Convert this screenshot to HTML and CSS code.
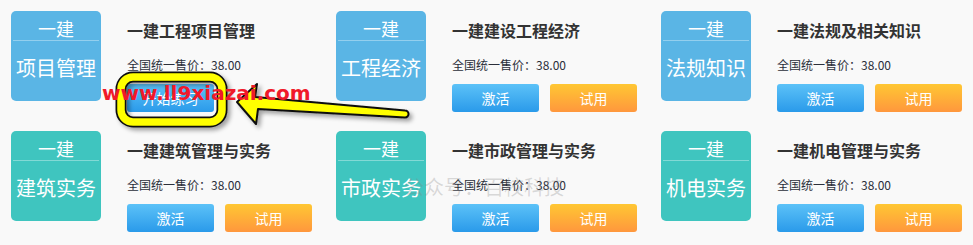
FILE: index.html
```html
<!DOCTYPE html>
<html lang="zh-CN">
<head>
<meta charset="utf-8">
<title>一建课程</title>
<link rel="stylesheet" href="styles.css">
</head>
<body>
<div class="page">
  <div class="grid">
    <div class="card">
      <div class="tile blue"><div class="tile-top">一建</div><div class="tile-line"></div><div class="tile-main">项目管理</div></div>
      <div class="info">
        <div class="title">一建工程项目管理</div>
        <div class="price">全国统一售价：38.00</div>
        <div class="btns"><span class="btn b-blue">开始练习</span></div>
      </div>
    </div>
    <div class="card">
      <div class="tile blue"><div class="tile-top">一建</div><div class="tile-line"></div><div class="tile-main">工程经济</div></div>
      <div class="info">
        <div class="title">一建建设工程经济</div>
        <div class="price">全国统一售价：38.00</div>
        <div class="btns"><span class="btn b-blue">激活</span><span class="btn b-orange">试用</span></div>
      </div>
    </div>
    <div class="card">
      <div class="tile blue"><div class="tile-top">一建</div><div class="tile-line"></div><div class="tile-main">法规知识</div></div>
      <div class="info">
        <div class="title">一建法规及相关知识</div>
        <div class="price">全国统一售价：38.00</div>
        <div class="btns"><span class="btn b-blue">激活</span><span class="btn b-orange">试用</span></div>
      </div>
    </div>
    <div class="card">
      <div class="tile teal"><div class="tile-top">一建</div><div class="tile-line"></div><div class="tile-main">建筑实务</div></div>
      <div class="info">
        <div class="title">一建建筑管理与实务</div>
        <div class="price">全国统一售价：38.00</div>
        <div class="btns"><span class="btn b-blue">激活</span><span class="btn b-orange">试用</span></div>
      </div>
    </div>
    <div class="card">
      <div class="tile teal"><div class="tile-top">一建</div><div class="tile-line"></div><div class="tile-main">市政实务</div></div>
      <div class="info">
        <div class="title">一建市政管理与实务</div>
        <div class="price">全国统一售价：38.00</div>
        <div class="btns"><span class="btn b-blue">激活</span><span class="btn b-orange">试用</span></div>
      </div>
    </div>
    <div class="card">
      <div class="tile teal"><div class="tile-top">一建</div><div class="tile-line"></div><div class="tile-main">机电实务</div></div>
      <div class="info">
        <div class="title">一建机电管理与实务</div>
        <div class="price">全国统一售价：38.00</div>
        <div class="btns"><span class="btn b-blue">激活</span><span class="btn b-orange">试用</span></div>
      </div>
    </div>
  </div>

  <svg class="marks" width="973" height="245" viewBox="0 0 973 245" xmlns="http://www.w3.org/2000/svg">
    <defs>
      <filter id="sh" x="-20%" y="-40%" width="140%" height="180%">
        <feDropShadow dx="3" dy="3" stdDeviation="2" flood-color="#000" flood-opacity="0.35"/>
      </filter>
    </defs>
    <g filter="url(#sh)">
      <rect x="121" y="77" width="101" height="45" rx="12" ry="12" fill="none" stroke="#111" stroke-width="11"/>
      <rect x="121" y="77" width="101" height="45" rx="12" ry="12" fill="none" stroke="#ffff00" stroke-width="7.5"/>
    </g>
    <path filter="url(#sh)" d="M237,102 L257,84 L255,97 L405,110.5 A3.5,3.5 0 0 1 405,117.5 L258,109 L256,124 Z" fill="#ffff00" stroke="#111" stroke-width="2" stroke-linejoin="round"/>
  </svg>
  <div class="wm-site">www.ll9xiazai.com</div>
  <div class="wm-gzh">公众号：百校科技</div>
</div>
</body>
</html>
```
FILE: styles.css
```css
html, body {
  margin: 0;
  padding: 0;
  background: #f9f9f9;
}
body {
  font-family: "Noto Sans CJK SC", "Microsoft YaHei", sans-serif;
  color: #333;
}
.page {
  position: relative;
  width: 973px;
  height: 245px;
  overflow: hidden;
}
.grid {
  display: grid;
  grid-template-columns: repeat(3, 325px);
  grid-auto-rows: 120px;
  padding: 11px 0 0 11px;
}
.card {
  display: flex;
  align-items: flex-start;
}
.tile {
  width: 90px;
  height: 90px;
  border-radius: 5px;
  color: #fff;
  display: flex;
  flex-direction: column;
  align-items: stretch;
  text-align: center;
  flex: none;
}
.blue { background: #5ab5e5; }
.teal { background: #3fc5bf; }
.tile-top {
  height: 29px;
  box-sizing: border-box;
  padding-top: 8px;
  font-size: 18px;
  line-height: 18px;
}
.tile-line {
  height: 1px;
  margin: 0 2px;
  background: rgba(255, 255, 255, 0.35);
}
.tile-main {
  padding-top: 17px;
  font-size: 20px;
  line-height: 20px;
}
.info {
  margin-left: 26px;
  padding-top: 9px;
  display: flex;
  flex-direction: column;
}
.title {
  font-size: 16px;
  line-height: 20px;
  font-weight: 700;
  color: #333;
}
.price {
  margin-top: 17px;
  font-size: 12px;
  line-height: 16px;
  color: #2b2f3a;
}
.btns {
  margin-top: 11px;
  display: flex;
  gap: 11px;
}
.btn {
  width: 87px;
  height: 28px;
  border-radius: 3px;
  color: #fff;
  font-size: 14px;
  line-height: 28px;
  text-align: center;
}
.b-blue {
  background: linear-gradient(#5cc2f8, #2a9aea);
}
.b-orange {
  background: linear-gradient(#ffc733, #ff973d);
}
.marks {
  position: absolute;
  left: 0;
  top: 0;
  pointer-events: none;
}
.wm-site {
  position: absolute;
  left: 102px;
  top: 81px;
  font-family: "DejaVu Sans", sans-serif;
  font-weight: 700;
  font-size: 20px;
  line-height: 24px;
  color: #f0192a;
  white-space: nowrap;
}
.wm-gzh {
  position: absolute;
  left: 404px;
  top: 176px;
  font-size: 20px;
  line-height: 22px;
  color: rgba(130, 130, 130, 0.28);
  white-space: nowrap;
}
```
